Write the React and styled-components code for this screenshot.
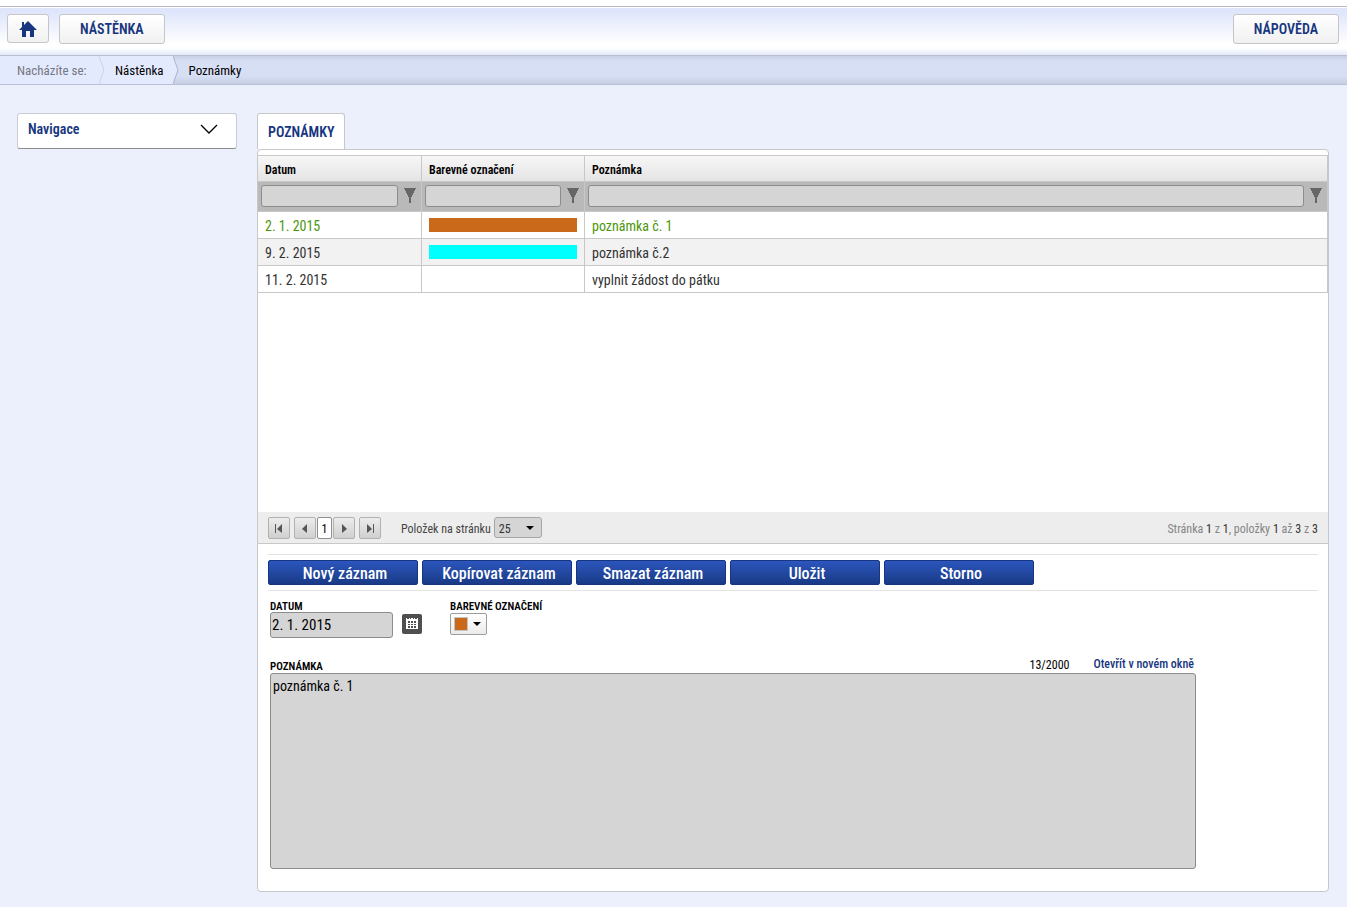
import React, { useState } from 'react';
import styled, { createGlobalStyle, css } from 'styled-components';

const colors = {
    navy: '#17367f',
    line: '#c8c8c8',
    field: '#d5d5d5',
    fieldBorder: '#8c8c8c',
    orange: '#ca6919',
};

const GlobalStyle = createGlobalStyle`
    * {
        box-sizing: border-box;
    }

    body {
        margin: 0;
        background: #ecf0fd;
        color: #000;
        font-family: 'Roboto Condensed', 'Liberation Sans Narrow', Roboto, sans-serif;
        font-size: 12px;
    }

    button, input, select, textarea {
        font-family: inherit;
        margin: 0;
    }
`;

/* Header Section */
const TopBar = styled.header`
    display: flex;
    align-items: flex-start;
    justify-content: space-between;
    height: 55px;
    padding: 14px 8px 0 7px;
    background: linear-gradient(#fff 6px, #b9bbc2 6px, #b9bbc2 7px, #fff 7px, #fff 8px, #dfe6fb 8px, #dfe6fb 12px, #fff 44px, #fff 48px, #e3e9f8 55px);
`;

const TopGroup = styled.div`
    display: flex;
    gap: 10px;
`;

const TopButton = styled.button`
    display: flex;
    align-items: center;
    justify-content: center;
    height: ${props => (props.$icon ? 29 : 30)}px;
    padding: 0 ${props => (props.$icon ? 11 : 20)}px;
    border: 1px solid #c5c5ca;
    border-radius: 3px;
    background: linear-gradient(#fff, #f1f1f1);
    color: ${colors.navy};
    font-size: 14px;
    font-weight: 600;
    text-transform: uppercase;
    cursor: pointer;
`;

const Breadcrumb = styled.nav`
    display: flex;
    height: 30px;
    border-top: 1px solid #b9c0d4;
    border-bottom: 1px solid #b9c0d8;
    background: linear-gradient(#c8d0e6, #d7dff4 5px, #d7dff4 20px, #c6cee4);
    font-size: 13px;
    line-height: 29px;
`;

const CrumbLabel = styled.span`
    width: 99px;
    padding-left: 17px;
    background: #e4eafe;
    color: #747882;
`;

const Crumb = styled.a`
    padding: 0 9px 0 10px;
    background: ${props => (props.$current ? 'transparent' : '#e4eafe')};
    color: #000;
    text-decoration: none;
`;

const Separator = styled.svg`
    display: block;
    flex: none;
    width: 6px;
    height: 28px;
`;

/* Page layout */
const Main = styled.main`
    display: flex;
    align-items: flex-start;
    gap: 20px;
    padding: 28px 18px 15px 17px;
`;

const NavigationBox = styled.button`
    display: flex;
    flex: none;
    align-items: center;
    justify-content: space-between;
    width: 220px;
    height: 36px;
    padding: 0 18px 4px 10px;
    border: 1px solid #cbccd2;
    border-bottom: 1px solid #8c8c8c;
    border-radius: 3px;
    background: #fff;
    color: ${colors.navy};
    font-size: 14px;
    font-weight: 600;
    cursor: pointer;
`;

const Content = styled.section`
    flex: 1;
    min-width: 0;
`;

const Tab = styled.button`
    display: block;
    height: 36px;
    padding: 0 10px;
    border: 1px solid ${colors.line};
    border-bottom: 0;
    border-radius: 3px 3px 0 0;
    background: #fff;
    color: ${colors.navy};
    font-size: 14px;
    font-weight: 600;
    cursor: pointer;
`;

const Panel = styled.div`
    padding-top: 5px;
    border: 1px solid ${colors.line};
    border-radius: 4px;
    background: #fff;
`;

/* Grid of notes */
const GridArea = styled.div`
    min-height: 357px;
`;

const Grid = styled.table`
    width: 100%;
    table-layout: fixed;
    border-spacing: 0;
    border-top: 1px solid ${colors.line};
`;

const HeadCell = styled.th`
    width: ${props => props.$width || 'auto'};
    height: 26px;
    padding: 2px 7px 0;
    border-right: 1px solid ${colors.line};
    border-bottom: 1px solid ${colors.line};
    background: linear-gradient(#f7f7f7, #e4e4e4);
    font-size: 12px;
    font-weight: 600;
    text-align: left;
`;

const FilterCell = styled.td`
    height: 30px;
    padding: 0 3px 2px;
    border-right: 1px solid ${colors.line};
    border-bottom: 1px solid ${colors.line};
    background: #b9b9b9;
`;

const FilterRow = styled.div`
    display: flex;
    align-items: center;
    gap: 6px;
`;

const field = css`
    border: 1px solid ${colors.fieldBorder};
    border-radius: 3px;
    background: ${colors.field};
    color: #000;
`;

const FilterInput = styled.input`
    ${field}
    flex: 1;
    min-width: 0;
    height: 22px;
    padding: 0 4px;
    font-size: 12px;
`;

const FilterButton = styled.button`
    display: block;
    flex: none;
    width: 12px;
    height: 16px;
    margin-right: 2px;
    padding: 0;
    border: 0;
    background: none;
    cursor: pointer;
`;

const Row = styled.tr`
    background: ${props => (props.$striped ? '#f2f2f2' : '#fff')};
    color: ${props => (props.$selected ? '#4b960b' : '#333')};
    cursor: pointer;
`;

const Cell = styled.td`
    height: 27px;
    padding: 2px 7px 1px;
    border-right: 1px solid ${colors.line};
    border-bottom: 1px solid ${colors.line};
    font-size: 14px;
    line-height: 16px;
`;

const ColorBar = styled.div`
    height: 14px;
    margin-bottom: 1px;
    background: ${props => props.$color};
`;

/* Pager */
const Pager = styled.div`
    display: flex;
    align-items: center;
    height: 32px;
    padding: 0 10px;
    border-bottom: 1px solid ${colors.line};
    background: #ededed;
    color: #444;
    line-height: 16px;
`;

const PagerButtons = styled.div`
    display: flex;
    align-items: center;
`;

const PagerButton = styled.button`
    display: flex;
    align-items: center;
    justify-content: center;
    width: 22px;
    height: 22px;
    padding: 0;
    border: 1px solid #b1b1b1;
    border-radius: 2px;
    background: linear-gradient(#ececec, #d0d0d0);
    cursor: pointer;

    &:first-child {
        margin-right: 4px;
    }

    &:last-child {
        margin-left: 4px;
    }
`;

const PageNumber = styled.button`
    width: 15px;
    height: 22px;
    margin: 0 1px;
    padding: 2px 0 0;
    border: 1px solid #8f8f8f;
    border-radius: 2px;
    background: #fff;
    color: #000;
    font-size: 12px;
`;

const PageSizeLabel = styled.label`
    margin: 0 3px 0 20px;
    padding-top: 2px;
`;

const SelectWrap = styled.div`
    display: grid;
    align-items: center;
    width: 48px;

    select, svg {
        grid-area: 1 / 1;
    }

    svg {
        justify-self: end;
        margin-right: 8px;
        pointer-events: none;
    }
`;

const PageSize = styled.select`
    ${field}
    appearance: none;
    width: 100%;
    height: 21px;
    padding: 2px 4px 0;
    border-color: #a5a5a5;
    color: #333;
    font-size: 12px;
`;

const Summary = styled.div`
    margin-left: auto;
    padding-top: 2px;
    color: #858585;

    b {
        color: #333;
        font-weight: normal;
    }
`;

/* Detail form */
const Detail = styled.form`
    padding: 10px 10px 22px;
`;

const Toolbar = styled.div`
    display: flex;
    gap: 4px;
    padding: 5px 0;
    border-top: 1px solid #e3e3e3;
    border-bottom: 1px solid #e3e3e3;
`;

const Action = styled.button`
    width: 150px;
    height: 25px;
    padding: 2px 0 0 4px;
    border: 1px solid #17367f;
    border-radius: 2px;
    background: linear-gradient(#2c56bd, #193a86);
    color: #fff;
    font-size: 16px;
    font-weight: 500;
    line-height: 21px;
    cursor: pointer;
`;

const Fields = styled.div`
    display: flex;
    align-items: flex-start;
    padding: 11px 2px 0;
`;

const Field = styled.div`
    margin-right: ${props => props.$after || 0}px;
`;

const FieldLabel = styled.label`
    display: block;
    font-size: 11px;
    font-weight: 600;
    line-height: 10px;
    text-transform: uppercase;
`;

const FieldRow = styled.div`
    display: flex;
    align-items: center;
    gap: 9px;
`;

const DateInput = styled.input`
    ${field}
    width: 123px;
    height: 26px;
    padding: 0 1px;
    font-size: 15px;
`;

const CalendarButton = styled.button`
    width: 20px;
    height: 20px;
    margin-bottom: 2px;
    padding: 0;
    border: 0;
    border-radius: 2px;
    background: #4f4f4f;
    line-height: 0;
    cursor: pointer;
`;

const ColorPicker = styled.button`
    display: flex;
    align-items: center;
    gap: 5px;
    width: 37px;
    height: 22px;
    margin-top: 1px;
    padding: 0 3px;
    border: 1px solid #9d9d9d;
    border-radius: 2px;
    background: linear-gradient(#fff, #ebebeb);
    cursor: pointer;
`;

const Swatch = styled.span`
    width: 14px;
    height: 14px;
    border: 1px solid #c5c5c5;
    background: ${props => props.$color};
`;

const Note = styled.div`
    width: 926px;
    max-width: 100%;
    margin: 19px 2px 0;
`;

const NoteHead = styled.div`
    display: flex;
    align-items: flex-end;
    height: 16px;
    padding-bottom: 1px;
`;

const Counter = styled.span`
    margin-left: auto;
    line-height: 14px;
`;

const OpenLink = styled.a`
    margin: 0 2px 0 24px;
    color: ${colors.navy};
    font-weight: 500;
    line-height: 16px;
    text-decoration: none;
`;

const NoteText = styled.textarea`
    ${field}
    display: block;
    width: 100%;
    height: 196px;
    padding: 4px 2px;
    font-size: 14px;
    resize: none;
`;

const notes = [
    { date: '2. 1. 2015', color: colors.orange, text: 'poznámka č. 1' },
    { date: '9. 2. 2015', color: '#00ffff', text: 'poznámka č.2' },
    { date: '11. 2. 2015', color: null, text: 'vyplnit žádost do pátku' },
];

const columns = [
    { name: 'Datum', width: '164px' },
    { name: 'Barevné označení', width: '163px' },
    { name: 'Poznámka' },
];

const actions = ['Nový záznam', 'Kopírovat záznam', 'Smazat záznam', 'Uložit', 'Storno'];

const HomeIcon = () => (
    <svg width="18" height="16" viewBox="0 0 18 16" fill={colors.navy}>
        <path d="M9 0L5 4V1H3v5L0 9h3v7h4v-6h4v6h4V9h3z" />
    </svg>
);

const FunnelIcon = () => (
    <svg width="12" height="16" viewBox="0 0 12 16" fill="#666" shapeRendering="crispEdges">
        <path d="M0 0h12v1h-1v2h-1v2H9v2H8v2H7v6H5V9H4V7H3V5H2V3H1V1H0z" />
    </svg>
);

const Caret = () => (
    <svg width="8" height="4" viewBox="0 0 8 4">
        <path d="M0 0h8L4 4z" />
    </svg>
);

const PagerIcon = ({ back, edge }) => {
    // the triangle moves over by one pixel to leave room for the bar
    const forward = edge ? 'M2 1v9l5-4z' : 'M3 1v9l5-4z';
    const backward = edge ? 'M8 1v9L3 6z' : 'M7 1v9L2 6z';

    return (
        <svg width="10" height="10" viewBox="0 0 10 10" fill="#555">
            <path d={back ? backward : forward} />
            {edge && <path d={back ? 'M1 1h1v9H1z' : 'M8 1h1v9H8z'} />}
        </svg>
    );
};

const CalendarIcon = () => (
    <svg width="20" height="20" viewBox="0 0 20 20" shapeRendering="crispEdges">
        <path fill="#fff" d="M4 4h1v1h2V4h1v1h1V4h2v1h1V4h1v1h2V4h1v11H4z" />
        <path fill="#4f4f4f" d="M6 7h2v2H6zM9 7h2v2H9zM12 7h2v2h-2zM6 10h2v1H6zM9 10h2v1H9zM12 10h2v1h-2zM6 12h2v2H6zM9 12h2v2H9zM12 12h2v2h-2z" />
    </svg>
);

const CrumbSeparator = ({ dark }) => (
    <Separator viewBox="0 0 6 28">
        {!dark && <path d="M0 0h6v28H0z" fill="#e4eafe" />}
        <path d="M0 0l5 14-5 14" fill="#e4eafe" stroke={dark ? '#a9b1c8' : '#cbd2e8'} />
    </Separator>
);

const App = () => {
    const [selected, setSelected] = useState(0);
    const [date, setDate] = useState(notes[0].date);
    const [text, setText] = useState(notes[0].text);

    const select = (index) => {
        setSelected(index);
        setDate(notes[index].date);
        setText(notes[index].text);
    };

    return (
        <>
            <GlobalStyle />
            <TopBar>
                <TopGroup>
                    <TopButton $icon aria-label="Domů"><HomeIcon /></TopButton>
                    <TopButton>Nástěnka</TopButton>
                </TopGroup>
                <TopButton>Nápověda</TopButton>
            </TopBar>
            <Breadcrumb>
                <CrumbLabel>Nacházíte se:</CrumbLabel>
                <CrumbSeparator />
                <Crumb href="#nastenka">Nástěnka</Crumb>
                <CrumbSeparator dark />
                <Crumb href="#poznamky" $current>Poznámky</Crumb>
            </Breadcrumb>
            <Main>
                <NavigationBox>
                    Navigace
                    <svg width="18" height="10" viewBox="0 0 18 10" fill="none" stroke="#000" strokeWidth="1.3">
                        <path d="M1 1l8 8 8-8" />
                    </svg>
                </NavigationBox>
                <Content>
                    <Tab>POZNÁMKY</Tab>
                    <Panel>
                        <GridArea>
                            <Grid>
                                <thead>
                                    <tr>
                                        {columns.map(column => (
                                            <HeadCell key={column.name} $width={column.width}>{column.name}</HeadCell>
                                        ))}
                                    </tr>
                                    <tr>
                                        {columns.map(column => (
                                            <FilterCell key={column.name}>
                                                <FilterRow>
                                                    <FilterInput aria-label={column.name} />
                                                    <FilterButton aria-label={`Filtr ${column.name}`}><FunnelIcon /></FilterButton>
                                                </FilterRow>
                                            </FilterCell>
                                        ))}
                                    </tr>
                                </thead>
                                <tbody>
                                    {notes.map((note, index) => (
                                        <Row
                                            key={note.date}
                                            $striped={index % 2 === 1}
                                            $selected={index === selected}
                                            onClick={() => select(index)}
                                        >
                                            <Cell>{note.date}</Cell>
                                            <Cell>{note.color ? <ColorBar $color={note.color} /> : null}</Cell>
                                            <Cell>{note.text}</Cell>
                                        </Row>
                                    ))}
                                </tbody>
                            </Grid>
                        </GridArea>
                        <Pager>
                            <PagerButtons>
                                <PagerButton aria-label="První"><PagerIcon back edge /></PagerButton>
                                <PagerButton aria-label="Předchozí"><PagerIcon back /></PagerButton>
                                <PageNumber>1</PageNumber>
                                <PagerButton aria-label="Další"><PagerIcon /></PagerButton>
                                <PagerButton aria-label="Poslední"><PagerIcon edge /></PagerButton>
                            </PagerButtons>
                            <PageSizeLabel htmlFor="page-size">Položek na stránku</PageSizeLabel>
                            <SelectWrap>
                                <PageSize id="page-size" defaultValue="25">
                                    <option>25</option>
                                    <option>50</option>
                                </PageSize>
                                <Caret />
                            </SelectWrap>
                            <Summary>
                                Stránka <b>1</b> z <b>1</b>, položky <b>1</b> až <b>3</b> z <b>3</b>
                            </Summary>
                        </Pager>
                        <Detail onSubmit={event => event.preventDefault()}>
                            <Toolbar>
                                {actions.map(action => <Action key={action} type="button">{action}</Action>)}
                            </Toolbar>
                            <Fields>
                                <Field $after={28}>
                                    <FieldLabel htmlFor="date">Datum</FieldLabel>
                                    <FieldRow>
                                        <DateInput id="date" value={date} onChange={event => setDate(event.target.value)} />
                                        <CalendarButton type="button" aria-label="Kalendář"><CalendarIcon /></CalendarButton>
                                    </FieldRow>
                                </Field>
                                <Field>
                                    <FieldLabel htmlFor="color">Barevné označení</FieldLabel>
                                    <ColorPicker id="color" type="button">
                                        <Swatch $color={notes[selected].color || '#fff'} />
                                        <Caret />
                                    </ColorPicker>
                                </Field>
                            </Fields>
                            <Note>
                                <NoteHead>
                                    <FieldLabel htmlFor="note">Poznámka</FieldLabel>
                                    <Counter>{text.length}/2000</Counter>
                                    <OpenLink href="#okno">Otevřít v novém okně</OpenLink>
                                </NoteHead>
                                <NoteText id="note" value={text} onChange={event => setText(event.target.value)} />
                            </Note>
                        </Detail>
                    </Panel>
                </Content>
            </Main>
        </>
    );
};

export default App;
